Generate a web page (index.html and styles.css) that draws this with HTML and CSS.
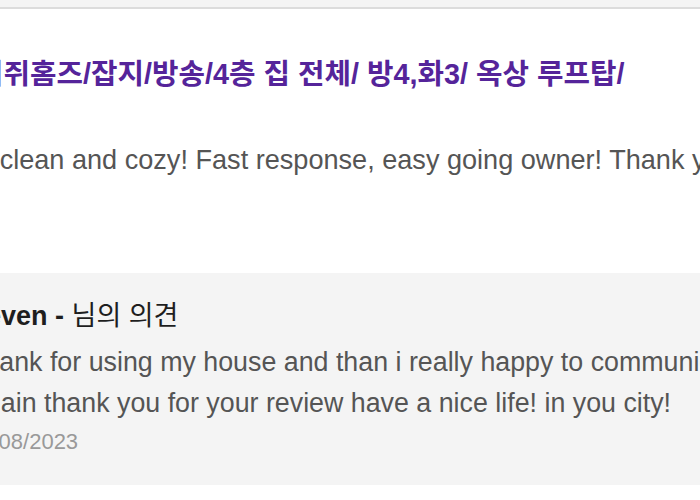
FILE: index.html
```html
<!DOCTYPE html>
<html lang="ko">
<head>
<meta charset="utf-8">
<link rel="stylesheet" href="styles.css">
</head>
<body>
<div class="topbar"></div>
<main class="page">
  <section class="listing">
    <h2 class="title">이쥐홈즈/잡지/방송/4층 집 전체/ 방4,화3/ 옥상 루프탑/</h2>
    <p class="review">So clean and cozy! Fast response, easy going owner! Thank you so much!</p>
  </section>
  <section class="reply">
    <h3 class="reply-name">Seven - <span class="reply-label">님의 의견</span></h3>
    <p class="reply-text">Thank for using my house and than i really happy to communicate with you.</p>
    <p class="reply-text">Again thank you for your review have a nice life! in you city!</p>
    <p class="reply-date">14/08/2023</p>
  </section>
</main>
</body>
</html>
```

FILE: styles.css
```css
* { box-sizing: border-box; }
html, body { margin: 0; padding: 0; }
body {
  width: 700px;
  height: 500px;
  overflow: hidden;
  background: #fff;
  font-family: "Liberation Sans", Arial, "Noto Sans CJK KR", sans-serif;
}
.topbar {
  height: 9px;
  background: #f4f4f4;
  border-bottom: 2px solid #dcdcdc;
}
.page {
  margin-left: -32px;
  width: 1000px;
}
.listing {
  padding-top: 50px;
}
.title {
  margin: 0 0 0 9px;
  font-family: "Liberation Sans", "Noto Sans CJK KR", sans-serif;
  font-size: 28.8px;
  font-weight: bold;
  line-height: 30px;
  color: #55249a;
  white-space: nowrap;
}
.review {
  margin: 56px 0 0 -9px;
  font-size: 27.1px;
  line-height: 30px;
  color: #555;
  white-space: nowrap;
}
.reply {
  margin-top: 98px;
  background: #f4f4f4;
  padding: 28px 0 31px 0;
}
.reply-name {
  margin: 0 0 11px 0;
  font-family: "Liberation Sans", "Noto Sans CJK KR", sans-serif;
  font-size: 27px;
  line-height: 30px;
  font-weight: bold;
  color: #1e1e1e;
  white-space: nowrap;
}
.reply-label {
  font-weight: normal;
}
.reply-text {
  margin: 0;
  font-size: 26.8px;
  line-height: 41px;
  color: #555;
  white-space: nowrap;
}
.reply-date {
  margin: 6px 0 0 0;
  font-size: 22px;
  line-height: 24px;
  color: #999;
}
```
